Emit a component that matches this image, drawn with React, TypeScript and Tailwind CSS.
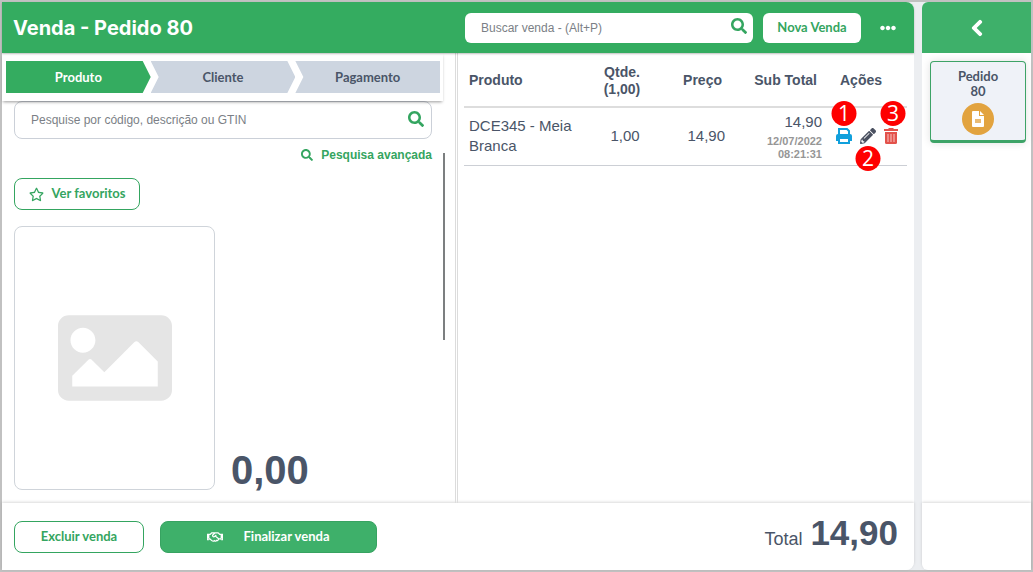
import type { ReactNode } from "react";
import { FaChevronLeft, FaEllipsisH, FaImage, FaPencilAlt, FaRegHandshake, FaRegStar, FaSearch } from "react-icons/fa";

const steps = [
  { label: "Produto", shape: "[clip-path:polygon(0_0,calc(100%-8px)_0,100%_50%,calc(100%-8px)_100%,0_100%)] bg-[#34ac60] text-white" },
  { label: "Cliente", shape: "[clip-path:polygon(0_0,calc(100%-8px)_0,100%_50%,calc(100%-8px)_100%,0_100%,8px_50%)] bg-[#cdd5e0] text-[#4a5568]" },
  { label: "Pagamento", shape: "[clip-path:polygon(0_0,100%_0,100%_100%,0_100%,8px_50%)] bg-[#cdd5e0] text-[#4a5568]" },
];

const PrintIcon = () => (
  <svg viewBox="0 0 16 16" className="h-4 w-4" fill="none">
    <path d="M3 7V1h8l2 2v4" stroke="#11a0dc" strokeWidth="2" />
    <path d="M2 6h12q2 0 2 2v5H0V8q0-2 2-2z" fill="#11a0dc" />
    <path d="M3 10h10v5H3z" fill="#fff" stroke="#11a0dc" strokeWidth="2" />
  </svg>
);

const TrashIcon = () => (
  <svg viewBox="0 0 14 16" className="h-4 w-[14px]">
    <path d="M0 1h4l1-1h4l1 1h4v2H0z" fill="#e3524b" />
    <path d="M1 4h12v10.500Q13 16 11.500 16h-9Q1 16 1 14.500z" fill="#e3524b" />
    <path d="M4 6v8M7 6v8M10 6v8" stroke="#f5b3b0" strokeWidth="1.200" />
  </svg>
);

const FileIcon = () => (
  <svg viewBox="0 0 12 16" className="h-4 w-3">
    <path d="M1 0h6v5h5v10q0 1-1 1H1q-1 0-1-1V1q0-1 1-1zM8 0l4 4H8z" fill="#fff" />
    <path d="M3 8h6v4H3z" fill="#e9bb74" />
  </svg>
);

const Badge = ({ children, className }: { children: ReactNode; className: string }) => (
  <span
    className={`absolute flex h-[25px] w-[25px] -translate-x-1/2 items-center justify-center rounded-full bg-[#fe0000] font-['Open_Sans',sans-serif] text-[21px] leading-none text-white ${className}`}
  >
    {children}
  </span>
);

const Header = () => (
  <header className="relative z-20 flex h-[51px] items-center rounded-tr-lg bg-[#34ac60] pr-[18px] pl-[11px] shadow-[0_1px_2px_rgba(0,0,0,0.25)]">
    <h1 className="flex-1 font-[Inter,sans-serif] text-xl font-bold text-white">Venda - Pedido 80</h1>
    <div className="relative w-[288px]">
      <input
        type="text"
        aria-label="Buscar venda"
        placeholder="Buscar venda - (Alt+P)"
        className="block h-[30px] w-full rounded-md bg-white pr-10 pl-4 text-xs text-[#4a5568] outline-none placeholder:text-[#7b7f86]"
      />
      <button aria-label="Buscar" className="absolute top-[5px] right-[6px] text-[#34a560]">
        <FaSearch size={16} />
      </button>
    </div>
    <button className="ml-[10px] h-[30px] w-[98px] rounded-md bg-white font-[Lato,sans-serif] text-[13px] font-bold text-[#34a560]">
      Nova Venda
    </button>
    <button aria-label="Mais opções" className="ml-[19px] text-white">
      <FaEllipsisH size={16} />
    </button>
  </header>
);

const ProductPane = () => (
  <section className="relative border-r-[3px] border-double border-[#dcdcdc]">
    <nav className="relative z-10 mr-3 flex bg-white py-2 pr-[3px] pl-1 shadow-[0_2px_3px_-1px_rgba(0,0,0,0.4)]">
      {steps.map((step) => (
        <button key={step.label} className={`h-8 flex-1 pt-px font-[Lato,sans-serif] text-[13px] font-bold ${step.shape}`}>
          {step.label}
        </button>
      ))}
    </nav>

    <div className="mr-[23px] ml-3">
      <div className="relative">
        <input
          type="text"
          aria-label="Pesquisar produto"
          placeholder="Pesquise por código, descrição ou GTIN"
          className="block h-[38px] w-full rounded-lg border border-[#cbd0d8] bg-white pr-10 pl-4 text-xs text-[#4a5568] outline-none placeholder:text-[#7b7f86]"
        />
        <button aria-label="Pesquisar" className="absolute top-[10px] right-2 text-[#34a560]">
          <FaSearch size={16} />
        </button>
      </div>
      <div className="mt-2 flex justify-end">
        <button className="flex items-center gap-2 text-xs leading-4 font-bold text-[#34a560]">
          <FaSearch size={12} />
          Pesquisa avançada
        </button>
      </div>
      <button className="mt-[15px] flex h-8 w-[126px] items-center justify-center gap-2 rounded-lg border border-[#34a560] font-[Lato,sans-serif] text-[13px] font-bold text-[#34a560]">
        <FaRegStar size={15} />
        Ver favoritos
      </button>
      <div className="mt-4 flex items-end gap-4 pb-3">
        <div className="flex h-[264px] w-[201px] items-center justify-center rounded-lg border border-[#cfd4da] text-[#e5e5e5]">
          <FaImage size={114} />
        </div>
        <strong className="text-[40px] leading-10 text-[#4a5568]">0,00</strong>
      </div>
    </div>
    {/* Scroll thumb */}
    <span className="absolute top-[100px] right-[10px] h-[187px] w-[2px] bg-[#7c7f80]" />
  </section>
);

const ItemsPane = () => (
  <section className="pr-[7px] pl-[6px] text-[#4a5568]">
    <table className="w-full table-fixed">
      <thead>
        <tr className="h-[54px] border-b-2 border-[#dddddd] text-sm leading-[17px]">
          <th className="pt-0.5 pl-[5px] text-left">Produto</th>
          <th className="w-[60px] pt-0.5">
            Qtde.
            <br />
            (1,00)
          </th>
          <th className="w-20 pt-0.5 pr-[10px] text-right">Preço</th>
          <th className="w-[95px] pt-0.5 pr-[10px] text-right">Sub Total</th>
          <th className="w-20 pt-0.5 pr-3">Ações</th>
        </tr>
      </thead>
      <tbody>
        <tr className="h-[58px] border-b border-[#cccfd5] text-[15px] leading-5">
          <td className="pl-[5px]">
            DCE345 - Meia
            <br />
            Branca
          </td>
          <td className="pl-[6px] text-center">1,00</td>
          <td className="pr-[7px] text-right">14,90</td>
          <td className="pr-[5px] text-right">
            14,90
            <small className="block pt-[3px] text-[11px] leading-[13px] font-bold text-[#969696]">
              12/07/2022
              <br />
              08:21:31
            </small>
          </td>
          <td>
            <div className="flex items-center justify-center gap-2">
              <button aria-label="Imprimir" className="relative">
                <PrintIcon />
                <Badge className="-top-[27px] left-1/2">1</Badge>
              </button>
              <button aria-label="Editar" className="relative text-[#4a5060]">
                <FaPencilAlt size={16} />
                <Badge className="top-[18px] left-1/2">2</Badge>
              </button>
              <button aria-label="Excluir item" className="relative">
                <TrashIcon />
                <Badge className="-top-[27px] left-[9px]">3</Badge>
              </button>
            </div>
          </td>
        </tr>
      </tbody>
    </table>
  </section>
);

const Footer = () => (
  <footer className="flex h-[67px] items-center rounded-br-lg bg-white px-3 shadow-[0_-1px_3px_rgba(0,0,0,0.15)]">
    <button className="h-8 w-[130px] rounded-lg border border-[#34a560] pt-px font-[Lato,sans-serif] text-[13px] font-bold text-[#34a560]">
      Excluir venda
    </button>
    <button className="ml-4 flex h-8 w-[217px] items-center justify-center gap-5 rounded-lg border border-[#37a361] bg-[#3eb06a] pt-px font-[Lato,sans-serif] text-[13px] font-bold text-white">
      <FaRegHandshake size={16} />
      Finalizar venda
    </button>
    <p className="mr-1 mb-2 ml-auto flex items-baseline gap-2 text-[#4a5568]">
      <span className="text-lg">Total</span>
      <strong className="text-[35px] leading-10">14,90</strong>
    </p>
  </footer>
);

const Sidebar = () => (
  <aside className="flex w-[109px] flex-col rounded-l-md bg-white">
    <div className="flex h-[51px] items-center justify-center rounded-tl-md bg-[#3eb06a]">
      <button aria-label="Recolher" className="text-white">
        <FaChevronLeft size={18} stroke="currentColor" strokeWidth={30} />
      </button>
    </div>
    <div className="flex-1 pt-2 pr-[5px] pl-2">
      <button className="flex h-[82px] w-full flex-col items-center rounded border border-b-[3px] border-[#3da367] bg-[#eff2f8] pt-[7px] font-[Lato,sans-serif] text-[13px] leading-[15px] font-bold text-[#4a5568] shadow-[0_0_8px_rgba(0,0,0,0.12)]">
        <span>Pedido</span>
        <span>80</span>
        <span className="mt-1 flex h-8 w-8 items-center justify-center rounded-full bg-[#e2a33f]">
          <FileIcon />
        </span>
      </button>
    </div>
    <div className="h-[67px] rounded-bl-md shadow-[0_-1px_3px_rgba(0,0,0,0.15)]" />
  </aside>
);

const App = () => {
  return (
    <div className="flex min-h-screen gap-2 border-2 border-[#c1c1c1] bg-[#eceef1] font-['Liberation_Sans',Arial,sans-serif]">
      <main className="flex min-w-0 flex-1 flex-col rounded-r-lg bg-white">
        <Header />
        <div className="grid flex-1 grid-cols-2">
          <ProductPane />
          <ItemsPane />
        </div>
        <Footer />
      </main>
      <Sidebar />
    </div>
  );
};

export default App;
